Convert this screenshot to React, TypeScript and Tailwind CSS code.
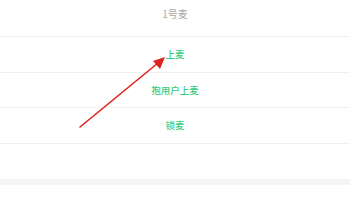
const ROWS = ['上麦', '抱用户上麦', '锁麦']

export default function App() {
  return (
    <div
      className="relative w-[350px] h-[220px] overflow-hidden bg-white"
      style={{ fontFamily: '"Noto Sans CJK SC", "Noto Sans", sans-serif' }}
    >
      {/* Sheet title */}
      <div className="h-[37px] flex justify-center pt-[5px] border-b border-[#f0f0f0]">
        <span className="text-[10px] leading-[18px] text-[#a8a8a8]">1号麦</span>
      </div>

      {/* Actions */}
      {ROWS.map((label) => (
        <div
          key={label}
          className="h-[35.5px] flex items-center justify-center border-b border-[#f0f0f0]"
        >
          <span className="text-[9.5px] font-medium text-[#3ccb7c]">{label}</span>
        </div>
      ))}

      {/* Empty slot + divider */}
      <div className="h-[35px]" />
      <div className="h-[6px] bg-[#f5f5f5]" />
      <div className="h-[35px]" />

      {/* Annotation arrow */}
      <svg className="absolute left-0 top-0" width="350" height="220" viewBox="0 0 350 220">
        <line x1="80" y1="127" x2="158" y2="63" stroke="#e0201f" strokeWidth="1.6" strokeLinecap="round" />
        <polygon points="165,57 153,61 160,69" fill="#e0201f" />
      </svg>
    </div>
  )
}
